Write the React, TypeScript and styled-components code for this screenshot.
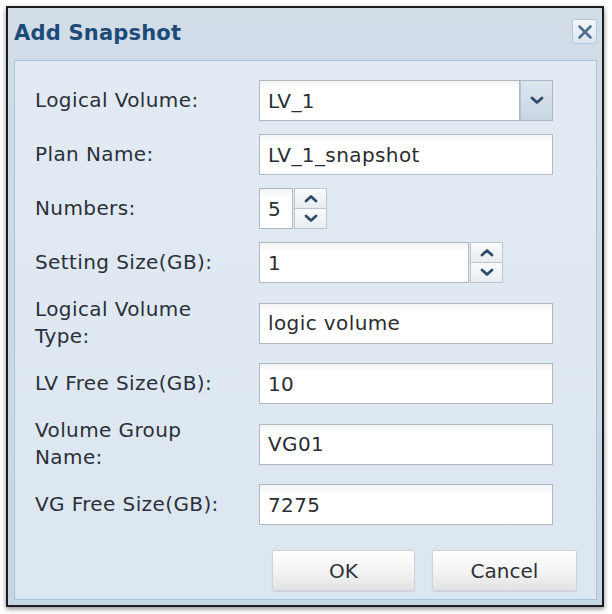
import React from "react";
import styled, { createGlobalStyle } from "styled-components";

const Global = createGlobalStyle`
  html, body { margin: 0; padding: 0; background: #ffffff; }
  body { font-family: "DejaVu Sans", Verdana, sans-serif; }
`;

const Page = styled.div`
  padding: 6px 0 0 6px;
  width: 612px;
  height: 614px;
  box-sizing: border-box;
`;

const Dialog = styled.div`
  width: 598px;
  height: 601px;
  box-sizing: border-box;
  border: 2px solid #1b1d20;
  box-shadow: 0 2px 5px rgba(0, 0, 0, 0.45);
  background: linear-gradient(#d2dde8, #c8d5e2);
  display: flex;
  flex-direction: column;
  padding: 0 5px 5px 6px;
`;

const Header = styled.div`
  height: 52px;
  display: flex;
  align-items: center;
  justify-content: space-between;
  box-sizing: border-box;
`;

const Title = styled.div`
  font-family: "DejaVu Sans", Verdana, sans-serif;
  font-weight: bold;
  font-size: 21px;
  letter-spacing: 0.2px;
  color: #1d4b78;
  margin-top: -3px;
`;

const CloseButton = styled.div`
  width: 25px;
  height: 25px;
  box-sizing: border-box;
  border: 1px solid #b7c7d8;
  border-radius: 3px;
  background: linear-gradient(#f3f7fb, #dbe5ef);
  display: flex;
  align-items: center;
  justify-content: center;
  margin-top: -5px;
`;

const Panel = styled.div`
  flex: 1;
  border: 1px solid #a9c3dd;
  background: linear-gradient(#e2ebf4, #dce6f0);
  padding: 19px 19px 0 20px;
  display: flex;
  flex-direction: column;
`;

const Form = styled.div`
  display: grid;
  grid-template-columns: 224px 294px;
  row-gap: 13px;
  align-items: center;
`;

const Label = styled.div`
  font-size: 20px;
  letter-spacing: 0.4px;
  line-height: 27px;
  color: #2a3039;
`;

const Field = styled.div<{ $width?: number }>`
  height: 41px;
  width: ${(p) => (p.$width ? `${p.$width}px` : "100%")};
  box-sizing: border-box;
  display: flex;
`;

const TextBox = styled.div`
  flex: 1;
  height: 100%;
  box-sizing: border-box;
  border: 1px solid #b3b8be;
  background: linear-gradient(#f2f3f4 0, #ffffff 8px, #ffffff);
  display: flex;
  align-items: center;
  padding-left: 8px;
  font-size: 20px;
  letter-spacing: 0.4px;
  color: #2a2d31;
`;

const DropButton = styled.div`
  width: 33px;
  height: 100%;
  box-sizing: border-box;
  border: 1px solid #a9b9c8;
  border-left: 1px solid #b6c4d2;
  background: linear-gradient(#dde6ef, #c8d5e2);
  display: flex;
  align-items: center;
  justify-content: center;
`;

const Spinner = styled.div`
  width: 33px;
  display: flex;
  flex-direction: column;
  margin-left: 1px;
`;

const SpinButton = styled.div`
  flex: 1;
  box-sizing: border-box;
  border: 1px solid #bfc5cc;
  background: linear-gradient(#fafbfc, #e8edf2);
  display: flex;
  align-items: center;
  justify-content: center;
  & + & { border-top: none; }
`;

const Footer = styled.div`
  display: flex;
  justify-content: flex-end;
  gap: 17px;
  margin-top: 25px;
`;

const Button = styled.div<{ $width: number }>`
  width: ${(p) => p.$width}px;
  height: 41px;
  box-sizing: border-box;
  border: 1px solid #d0d3d6;
  border-radius: 2px;
  background: linear-gradient(#ffffff, #f1f1f1 60%, #e2e2e2);
  box-shadow: 0 1px 1px rgba(0, 0, 0, 0.08);
  display: flex;
  align-items: center;
  justify-content: center;
  font-size: 20px;
  color: #2e3135;
`;

const Chevron = ({ up = false, w = 14 }: { up?: boolean; w?: number }) => (
  <svg width={w} height={9} viewBox="0 0 14 9">
    <polyline
      points={up ? "2,7 7,2.5 12,7" : "2,2 7,6.5 12,2"}
      fill="none"
      stroke="#2f4d6b"
      strokeWidth={2.8}
      strokeLinecap="round"
      strokeLinejoin="round"
    />
  </svg>
);

const CloseIcon = () => (
  <svg width={16} height={16} viewBox="0 0 16 16">
    <path d="M2.5 2.5 L13.5 13.5 M13.5 2.5 L2.5 13.5" stroke="#4e6c8d" strokeWidth={2.6} strokeLinecap="round" />
  </svg>
);

export default function App() {
  return (
    <>
      <Global />
      <Page>
        <Dialog>
          <Header>
            <Title>Add Snapshot</Title>
            <CloseButton>
              <CloseIcon />
            </CloseButton>
          </Header>
          <Panel>
            <Form>
              <Label>Logical Volume:</Label>
              <Field>
                <TextBox>LV_1</TextBox>
                <DropButton>
                  <Chevron />
                </DropButton>
              </Field>

              <Label>Plan Name:</Label>
              <Field>
                <TextBox>LV_1_snapshot</TextBox>
              </Field>

              <Label>Numbers:</Label>
              <Field $width={68}>
                <TextBox>5</TextBox>
                <Spinner>
                  <SpinButton>
                    <Chevron up />
                  </SpinButton>
                  <SpinButton>
                    <Chevron />
                  </SpinButton>
                </Spinner>
              </Field>

              <Label>Setting Size(GB):</Label>
              <Field $width={244}>
                <TextBox>1</TextBox>
                <Spinner>
                  <SpinButton>
                    <Chevron up />
                  </SpinButton>
                  <SpinButton>
                    <Chevron />
                  </SpinButton>
                </Spinner>
              </Field>

              <Label>
                Logical Volume
                <br />
                Type:
              </Label>
              <Field>
                <TextBox>logic volume</TextBox>
              </Field>

              <Label>LV Free Size(GB):</Label>
              <Field>
                <TextBox>10</TextBox>
              </Field>

              <Label>
                Volume Group
                <br />
                Name:
              </Label>
              <Field>
                <TextBox>VG01</TextBox>
              </Field>

              <Label>VG Free Size(GB):</Label>
              <Field>
                <TextBox>7275</TextBox>
              </Field>
            </Form>
            <Footer>
              <Button $width={143}>OK</Button>
              <Button $width={145}>Cancel</Button>
            </Footer>
          </Panel>
        </Dialog>
      </Page>
    </>
  );
}
